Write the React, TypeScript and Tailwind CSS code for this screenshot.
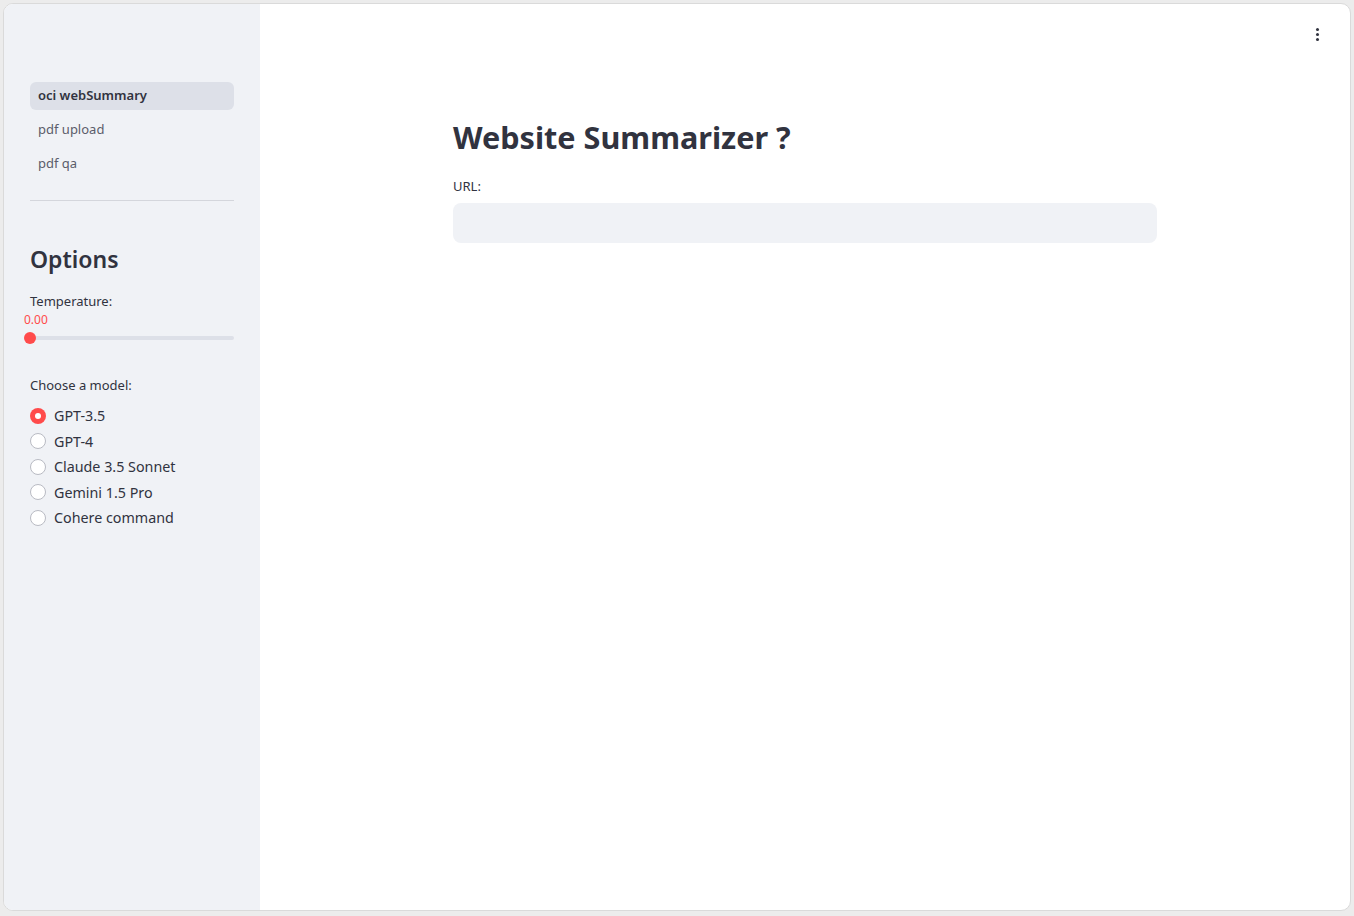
import React, { useState } from 'react';

const pages = ['oci webSummary', 'pdf upload', 'pdf qa'];
const models = ['GPT-3.5', 'GPT-4', 'Claude 3.5 Sonnet', 'Gemini 1.5 Pro', 'Cohere command'];

const Sidebar: React.FC = () => {
  const [model, setModel] = useState(models[0]);

  return (
    <aside className="w-[256px] shrink-0 bg-[#f0f2f6] px-[26px] pt-[78px]">
      {/* page nav */}
      <nav className="flex flex-col gap-[6px]">
        {pages.map((p, i) => (
          <div
            key={p}
            className={
              i === 0
                ? 'h-[28px] flex items-center px-[8px] rounded-[6px] bg-[#dde0e8] text-[13px] font-semibold text-[#31333f]'
                : 'h-[28px] flex items-center px-[8px] rounded-[6px] text-[13px] text-[#5b5d6b]'
            }
          >
            {p}
          </div>
        ))}
      </nav>
      <div className="mt-[22px] border-t border-[#d4d6dc]" />

      <h2 className="mt-[47px] text-[23px] font-semibold text-[#31333f] leading-none">Options</h2>

      {/* temperature slider */}
      <div className="mt-[24px] text-[13px] text-[#31333f] leading-none">Temperature:</div>
      <div className="relative mt-[8px] h-[30px]">
        <span className="absolute left-[-6px] top-[-2px] text-[12px] leading-none text-[#ff4b4b]">0.00</span>
        <div className="absolute left-0 right-0 top-[20px] h-[4px] rounded-full bg-[#dde0e8]" />
        <div className="absolute left-[-6px] top-[16px] w-[12px] h-[12px] rounded-full bg-[#ff4b4b]" />
      </div>

      {/* model radio */}
      <div className="mt-[33px] text-[13px] text-[#31333f] leading-none">Choose a model:</div>
      <div className="mt-[11px] flex flex-col">
        {models.map((m) => (
          <label key={m} className="h-[25.5px] flex items-center gap-[8px] cursor-pointer" onClick={() => setModel(m)}>
            {model === m ? (
              <span className="w-[16px] h-[16px] rounded-full bg-[#ff4b4b] flex items-center justify-center">
                <span className="w-[6px] h-[6px] rounded-full bg-white" />
              </span>
            ) : (
              <span className="w-[16px] h-[16px] rounded-full border border-[#b9bbc3] bg-white" />
            )}
            <span className="text-[14.3px] text-[#31333f]">{m}</span>
          </label>
        ))}
      </div>
    </aside>
  );
};

export default function App() {
  return (
    <div
      className="h-[916px] w-[1354px] bg-[#ececec] pt-[3px] pl-[3px] pr-[3px] pb-[5px]"
      style={{ fontFamily: '"Noto Sans", "Open Sans", sans-serif' }}
    >
      <div className="h-full flex rounded-[10px] overflow-hidden border border-[#dadada] bg-white">
        <Sidebar />
        <main className="relative flex-1 flex justify-center">
          <button className="absolute right-[29px] top-[22px] flex flex-col gap-[2px] p-[2px]">
            <span className="w-[3px] h-[3px] rounded-full bg-[#31333f]" />
            <span className="w-[3px] h-[3px] rounded-full bg-[#31333f]" />
            <span className="w-[3px] h-[3px] rounded-full bg-[#31333f]" />
          </button>
          <div className="w-[704px] pt-[118px]">
            <h1 className="text-[30.6px] font-bold text-[#31333f] leading-none">Website Summarizer ?</h1>
            <div className="mt-[27px] text-[13px] text-[#31333f] leading-none">URL:</div>
            <input className="mt-[10px] w-full h-[40px] rounded-[8px] bg-[#f0f2f6] outline-none px-3 text-[15px]" />
          </div>
        </main>
      </div>
    </div>
  );
}
